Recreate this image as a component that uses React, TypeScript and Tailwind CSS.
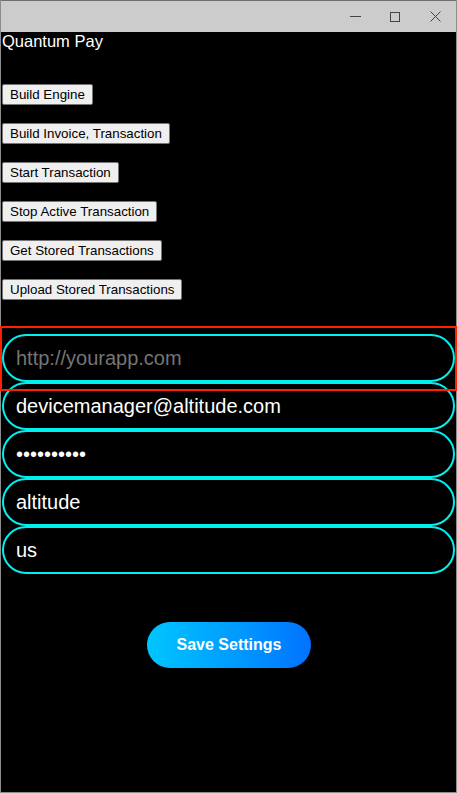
import React from "react";

const btn =
  "h-[21px] px-[7px] text-[13.33px] leading-none text-black bg-[#efefef] border border-[#767676] rounded-[2px] self-start whitespace-nowrap";

const inp =
  "h-[48px] w-full rounded-full border-2 border-[#00f0f0] bg-black pl-[12px] text-[20px] text-white outline-none placeholder:text-[#757575]";

export default function App() {
  return (
    <div
      className="relative w-[457px] h-[793px] bg-black border-x border-b border-[#8c8c8c] flex flex-col"
      style={{ fontFamily: '"Liberation Sans", Arial, sans-serif' }}
    >
      <div className="h-[32px] bg-[#cccccc] border-t border-[#6e6e6e] flex items-center justify-end shrink-0">
        <div className="w-[40px] flex justify-center">
          <svg width="11" height="11" viewBox="0 0 11 11">
            <line x1="0" y1="5.5" x2="11" y2="5.5" stroke="#444" strokeWidth="1" />
          </svg>
        </div>
        <div className="w-[40px] flex justify-center">
          <svg width="10" height="10" viewBox="0 0 10 10">
            <rect x="0.5" y="0.5" width="9" height="9" fill="none" stroke="#444" strokeWidth="1" />
          </svg>
        </div>
        <div className="w-[40px] flex justify-center mr-[1px]">
          <svg width="11" height="11" viewBox="0 0 11 11">
            <line x1="0.5" y1="0.5" x2="10.5" y2="10.5" stroke="#444" strokeWidth="1" />
            <line x1="10.5" y1="0.5" x2="0.5" y2="10.5" stroke="#444" strokeWidth="1" />
          </svg>
        </div>
      </div>

      <div className="flex flex-col px-px">
        <div className="text-white text-[16.5px] leading-[18px] h-[18px]">Quantum Pay</div>
        <div className="flex flex-col gap-[18px] mt-[34px]">
          <button className={btn}>Build Engine</button>
          <button className={btn}>Build Invoice, Transaction</button>
          <button className={btn}>Start Transaction</button>
          <button className={btn}>Stop Active Transaction</button>
          <button className={btn}>Get Stored Transactions</button>
          <button className={btn}>Upload Stored Transactions</button>
        </div>

        <div className="flex flex-col mt-[34px]">
          <input className={inp} placeholder="http://yourapp.com" readOnly />
          <input className={inp} defaultValue="devicemanager@altitude.com" />
          <input className={inp} type="password" defaultValue="1234567890" />
          <input className={inp} defaultValue="altitude" />
          <input className={inp} defaultValue="us" />
        </div>

        <div className="flex justify-center mt-[48px]">
          <button className="h-[46px] w-[164px] rounded-full bg-gradient-to-r from-[#00c6ff] to-[#0072ff] text-white font-bold text-[16px] ml-[1px]">
            Save Settings
          </button>
        </div>
      </div>

      <div className="absolute left-[-1px] top-[326px] w-[457px] h-[65px] border-2 border-[#ff2000] pointer-events-none" />
    </div>
  );
}
